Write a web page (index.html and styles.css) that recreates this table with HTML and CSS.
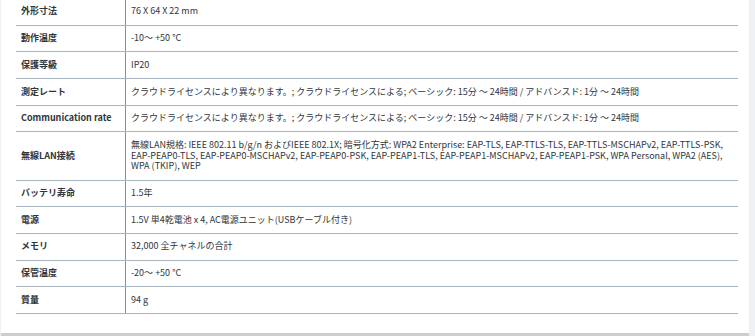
FILE: index.html
```html
<!DOCTYPE html>
<html lang="ja">
<head>
<meta charset="utf-8">
<link rel="stylesheet" href="styles.css">
</head>
<body>
<div class="page">
  <table class="spec">
    <tbody>
      <tr><th>外形寸法</th><td>76 X 64 X 22 mm</td></tr>
      <tr><th>動作温度</th><td>-10～ +50 °C</td></tr>
      <tr><th>保護等級</th><td>IP20</td></tr>
      <tr><th>測定レート</th><td>クラウドライセンスにより異なります。; クラウドライセンスによる; ベーシック: 15分 ～ 24時間 / アドバンスド: 1分 ～ 24時間</td></tr>
      <tr><th>Communication rate</th><td>クラウドライセンスにより異なります。; クラウドライセンスによる; ベーシック: 15分 ～ 24時間 / アドバンスド: 1分 ～ 24時間</td></tr>
      <tr><th>無線LAN接続</th><td>無線LAN規格: IEEE 802.11 b/g/n およびIEEE 802.1X; 暗号化方式: WPA2 Enterprise: EAP-TLS, EAP-TTLS-TLS, EAP-TTLS-MSCHAPv2, EAP-TTLS-PSK, EAP-PEAP0-TLS, EAP-PEAP0-MSCHAPv2, EAP-PEAP0-PSK, EAP-PEAP1-TLS, EAP-PEAP1-MSCHAPv2, EAP-PEAP1-PSK, WPA Personal, WPA2 (AES), WPA (TKIP), WEP</td></tr>
      <tr><th>バッテリ寿命</th><td>1.5年</td></tr>
      <tr><th>電源</th><td>1.5V 単4乾電池 x 4, AC電源ユニット(USBケーブル付き)</td></tr>
      <tr><th>メモリ</th><td>32,000 全チャネルの合計</td></tr>
      <tr><th>保管温度</th><td>-20～ +50 °C</td></tr>
      <tr><th>質量</th><td>94 g</td></tr>
    </tbody>
  </table>
</div>
</body>
</html>
```
FILE: styles.css
```css
html, body {
  margin: 0;
  padding: 0;
  background: #eef1f3;
}
body {
  font-family: "Noto Sans CJK JP", "Noto Sans", sans-serif;
  color: #2f363c;
  width: 755px;
  height: 336px;
  overflow: hidden;
}
.page {
  width: 748px;
  margin-left: 1px;
  box-sizing: border-box;
  background: #fff;
  padding: 0 10px 19px 15px;
  border-bottom: 3px solid #c9ced3;
}
.spec {
  width: 722px;
  border-collapse: collapse;
  font-size: 9px;
  line-height: 10.7px;
}
.spec th, .spec td {
  border-bottom: 1px solid #a9b5be;
  padding: 7.5px 5px;
  vertical-align: middle;
  text-align: left;
}
.spec tr:first-child th, .spec tr:first-child td {
  padding-top: 6.4px;
}
.spec th {
  width: 99px;
  font-weight: 700;
  border-right: 1px solid #7c91a0;
  white-space: nowrap;
}
.spec td {
  font-weight: 400;
}
```
